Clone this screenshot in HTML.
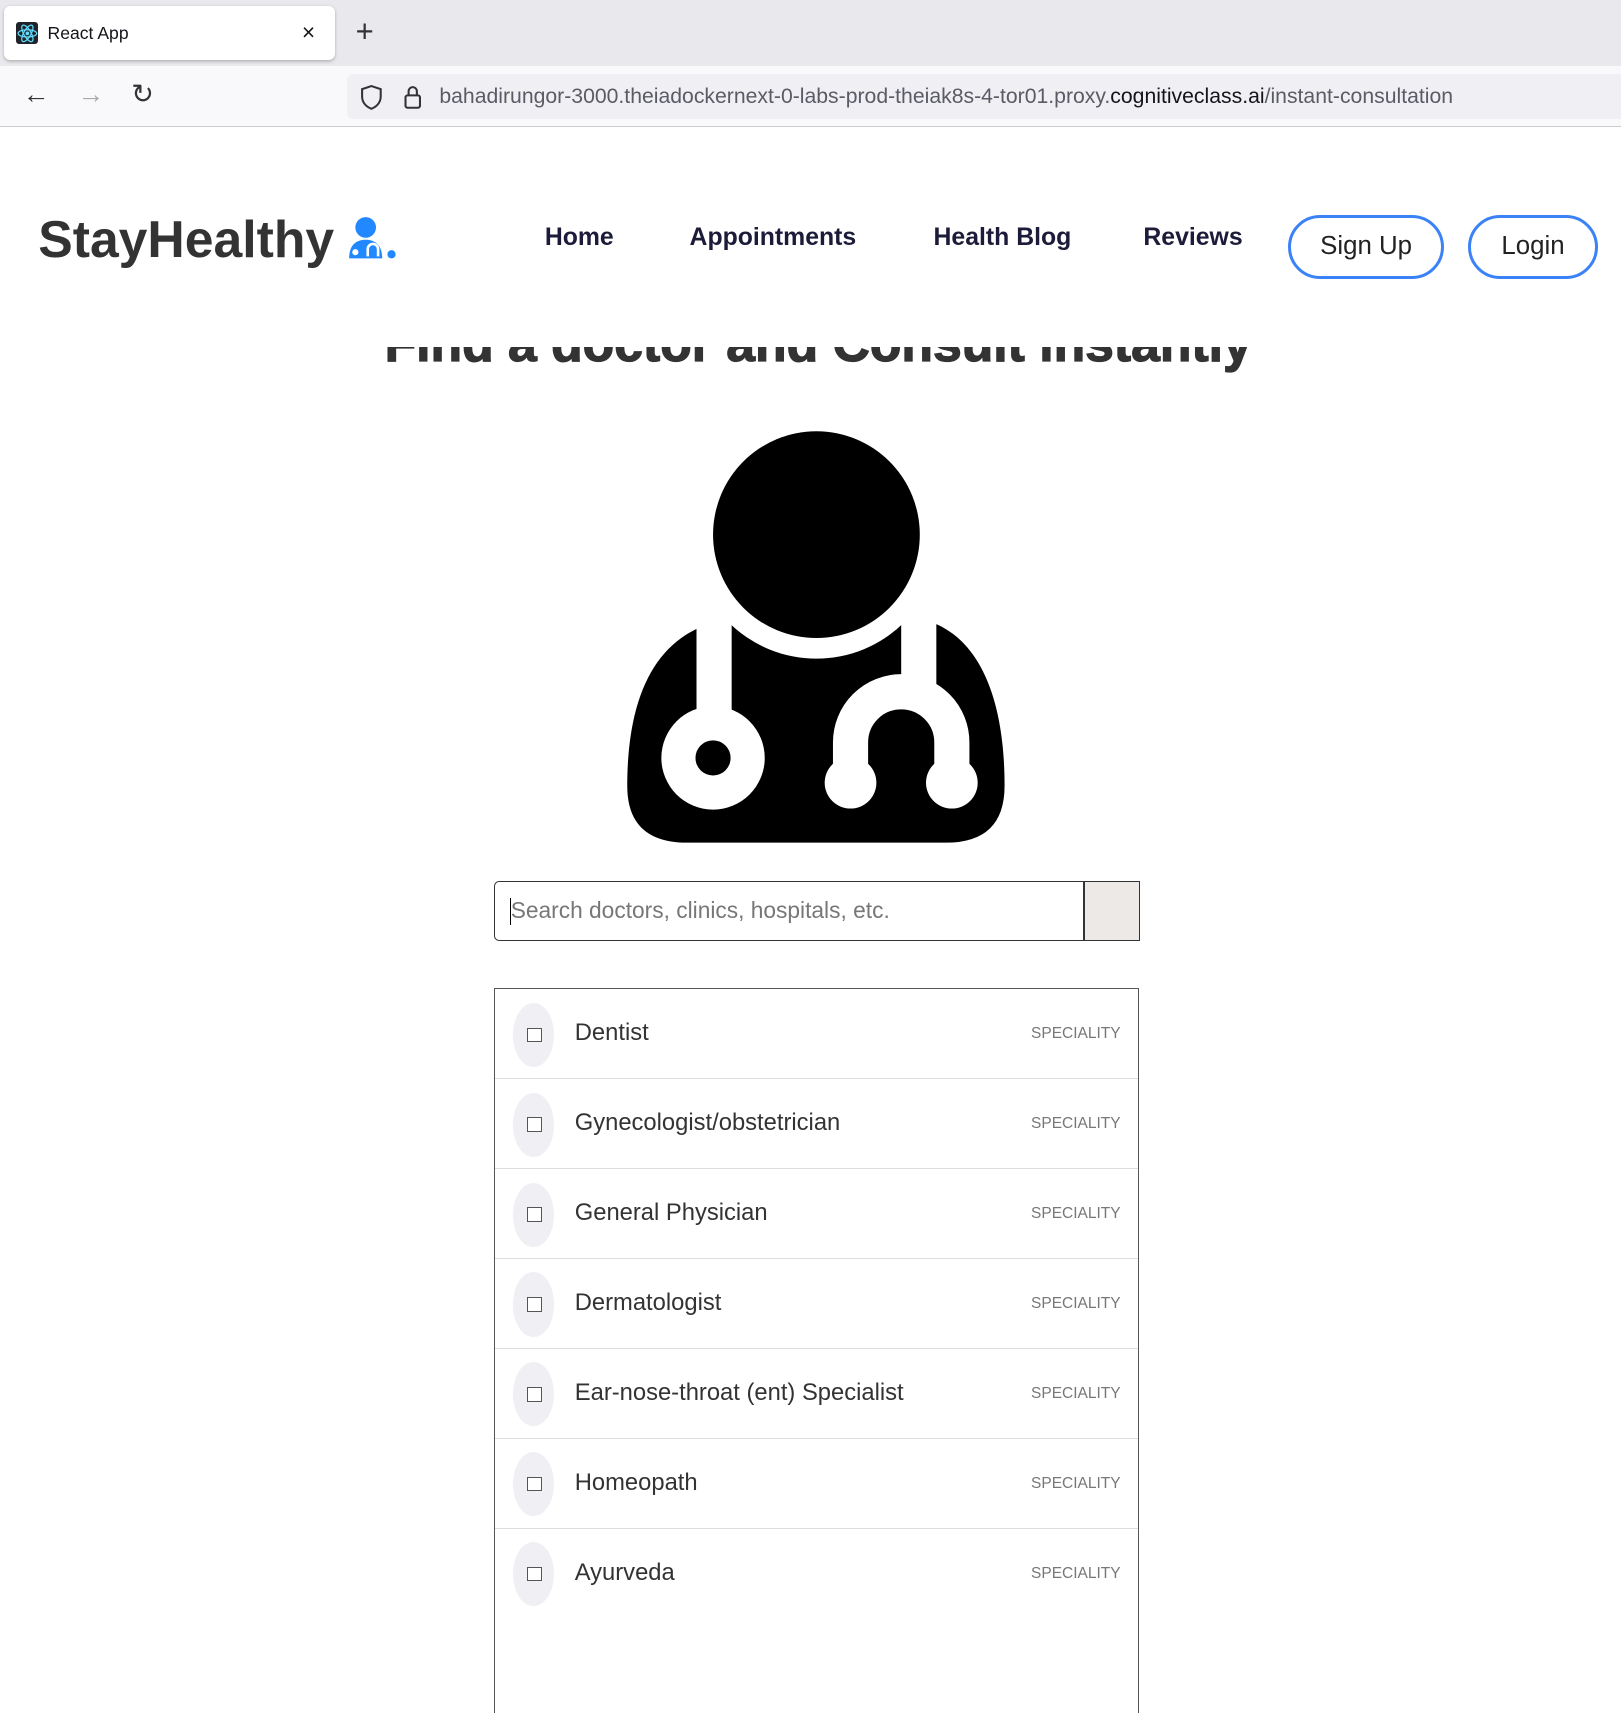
<!DOCTYPE html>
<html><head><meta charset="utf-8"><style>
html{zoom:1.0338}
body{margin:0;width:1568px;height:1547px;overflow:hidden;background:#fff;font-family:"Liberation Sans",sans-serif;position:relative}
.abs{position:absolute}
.nav{position:absolute;top:217px;font-size:24px;font-weight:bold;color:#1c1c3a}
.btn{position:absolute;top:208px;height:56px;border:3px solid #3b82f6;border-radius:32px;font-size:25px;color:#222;display:flex;align-items:center;justify-content:center;box-sizing:content-box}
.row{height:86px;border-bottom:1px solid #ddd;position:relative}
.row:last-child{border-bottom:none}
.circ{position:absolute;left:17px;top:13px;width:40px;height:62px;border-radius:50%;background:#efeff4}
.cb{position:absolute;left:31px;top:37px;width:12px;height:12px;border:1px solid #555;background:#fff}
.nm{position:absolute;left:77px;top:29px;font-size:23px;color:#333}
.sp{position:absolute;right:17px;top:35px;font-size:15px;color:#777}
</style></head><body>
<div class="abs" style="left:0;top:0;width:1568px;height:64px;background:#e9e9ed"></div>
<div class="abs" style="left:4px;top:6px;width:320px;height:52px;background:#fff;border-radius:6px;box-shadow:0 1px 3px rgba(0,0,0,.25)"></div>
<div class="abs" style="left:15px;top:21px;width:22px;height:22px;background:#20232a;border-radius:3px"></div>
<svg class="abs" style="left:15px;top:21px" width="22" height="22" viewBox="0 0 22 22"><g fill="none" stroke="#61dafb" stroke-width="1.2"><ellipse cx="11" cy="11" rx="9" ry="3.5"/><ellipse cx="11" cy="11" rx="9" ry="3.5" transform="rotate(60 11 11)"/><ellipse cx="11" cy="11" rx="9" ry="3.5" transform="rotate(120 11 11)"/></g><circle cx="11" cy="11" r="1.8" fill="#61dafb"/></svg>
<div class="abs" style="left:46px;top:22px;font-size:17px;color:#15141a">React App</div>
<div class="abs" style="left:292px;top:18px;font-size:22px;color:#15141a">×</div>
<div class="abs" style="left:344px;top:14px;font-size:30px;color:#333;font-weight:300">+</div>
<div class="abs" style="left:0;top:64px;width:1568px;height:58px;background:#f9f9fb;border-bottom:1px solid #ccc"></div>
<div class="abs" style="left:22px;top:76px;font-size:26px;color:#333">←</div>
<div class="abs" style="left:75px;top:76px;font-size:26px;color:#aaa">→</div>
<div class="abs" style="left:127px;top:76px;font-size:26px;color:#333">↻</div>
<div class="abs" style="left:336px;top:72px;width:1240px;height:43px;background:#f0f0f4;border-radius:6px"></div>
<svg class="abs" style="left:347px;top:81px" width="60" height="26" viewBox="0 0 60 26"><path d="M12 2 L21 5 V12 C21 18 17 22 12 24 C7 22 3 18 3 12 V5 Z" fill="none" stroke="#333" stroke-width="2"/><rect x="45" y="11" width="14" height="12" rx="2" fill="none" stroke="#333" stroke-width="2"/><path d="M48 11 V7 a4 4 0 0 1 8 0 V11" fill="none" stroke="#333" stroke-width="2"/></svg>
<div class="abs" style="left:425px;top:82px;font-size:20.5px;color:#5b5b66;white-space:nowrap">bahadirungor-3000.theiadockernext-0-labs-prod-theiak8s-4-tor01.proxy.<span style="color:#15141a">cognitiveclass.ai</span>/instant-consultation</div>

<div class="abs" style="left:372px;top:308px;font-size:50px;line-height:50px;font-weight:bold;color:#333;white-space:nowrap;-webkit-text-stroke:1.2px #333">Find a doctor and Consult instantly</div>
<div class="abs" style="left:0;top:123px;width:1568px;height:213px;background:#fff"></div>

<div class="abs" style="left:37px;top:202px;font-size:50px;font-weight:bold;color:#333">StayHealthy</div>
<svg class="abs" style="left:334px;top:208px" width="52" height="46" viewBox="0 0 52 46"><circle cx="20" cy="12" r="10" fill="#2188ff"/><path d="M4 42 C4 30 10 24 20 24 C30 24 36 30 36 42 Z" fill="#2188ff"/><circle cx="10" cy="36" r="3" fill="#fff"/><path d="M22 40 V33 a5 5 0 0 1 10 0 V40" stroke="#fff" stroke-width="2.5" fill="none"/><circle cx="45" cy="38" r="4" fill="#2188ff"/></svg>
<div class="nav" style="left:527px">Home</div>
<div class="nav" style="left:667px">Appointments</div>
<div class="nav" style="left:903px">Health Blog</div>
<div class="nav" style="left:1106px">Reviews</div>
<div class="btn" style="left:1246px;width:145px">Sign Up</div>
<div class="btn" style="left:1420px;width:120px">Login</div>

<svg class="abs" style="left:600px;top:410px" width="380" height="410" viewBox="600 410 380 410">
<path d="M690 602 C630 620 607 680 607 760 Q607 815 665 815 L915 815 Q972 815 972 760 C972 680 950 620 902 602 Z" fill="#000"/>
<circle cx="790" cy="517" r="120" fill="#fff"/>
<circle cx="790" cy="517" r="100" fill="#000"/>
<path d="M691 598 L691 700" stroke="#fff" stroke-width="34"/>
<circle cx="690" cy="733" r="50" fill="#fff"/><circle cx="690" cy="733" r="17" fill="#000"/>
<path d="M889 598 L889 668" stroke="#fff" stroke-width="34"/>
<path d="M823 757 L823 718 A49 49 0 0 1 921 718 L921 757" stroke="#fff" stroke-width="34" fill="none"/>
<circle cx="823" cy="757" r="25" fill="#fff"/><circle cx="921" cy="757" r="25" fill="#fff"/>
</svg>

<div class="abs" style="left:478px;top:852px;width:622px;height:56px;border:1px solid #333;border-radius:5px 0 0 5px"></div>
<div class="abs" style="left:1048px;top:852px;width:52px;height:56px;background:#ece9e7;border:1px solid #333;border-left:2px solid #333"></div>
<div class="abs" style="left:493px;top:869px;width:1px;height:26px;background:#000"></div>
<div class="abs" style="left:494px;top:868px;font-size:22px;color:#777">Search doctors, clinics, hospitals, etc.</div>

<div class="abs" style="left:478px;top:956px;width:622px;height:700px;border:1px solid #555;border-bottom:none">
<div class="row"><div class="circ"></div><div class="cb"></div><div class="nm">Dentist</div><div class="sp">SPECIALITY</div></div>
<div class="row"><div class="circ"></div><div class="cb"></div><div class="nm">Gynecologist/obstetrician</div><div class="sp">SPECIALITY</div></div>
<div class="row"><div class="circ"></div><div class="cb"></div><div class="nm">General Physician</div><div class="sp">SPECIALITY</div></div>
<div class="row"><div class="circ"></div><div class="cb"></div><div class="nm">Dermatologist</div><div class="sp">SPECIALITY</div></div>
<div class="row"><div class="circ"></div><div class="cb"></div><div class="nm">Ear-nose-throat (ent) Specialist</div><div class="sp">SPECIALITY</div></div>
<div class="row"><div class="circ"></div><div class="cb"></div><div class="nm">Homeopath</div><div class="sp">SPECIALITY</div></div>
<div class="row"><div class="circ"></div><div class="cb"></div><div class="nm">Ayurveda</div><div class="sp">SPECIALITY</div></div>
</div>
</body></html>
